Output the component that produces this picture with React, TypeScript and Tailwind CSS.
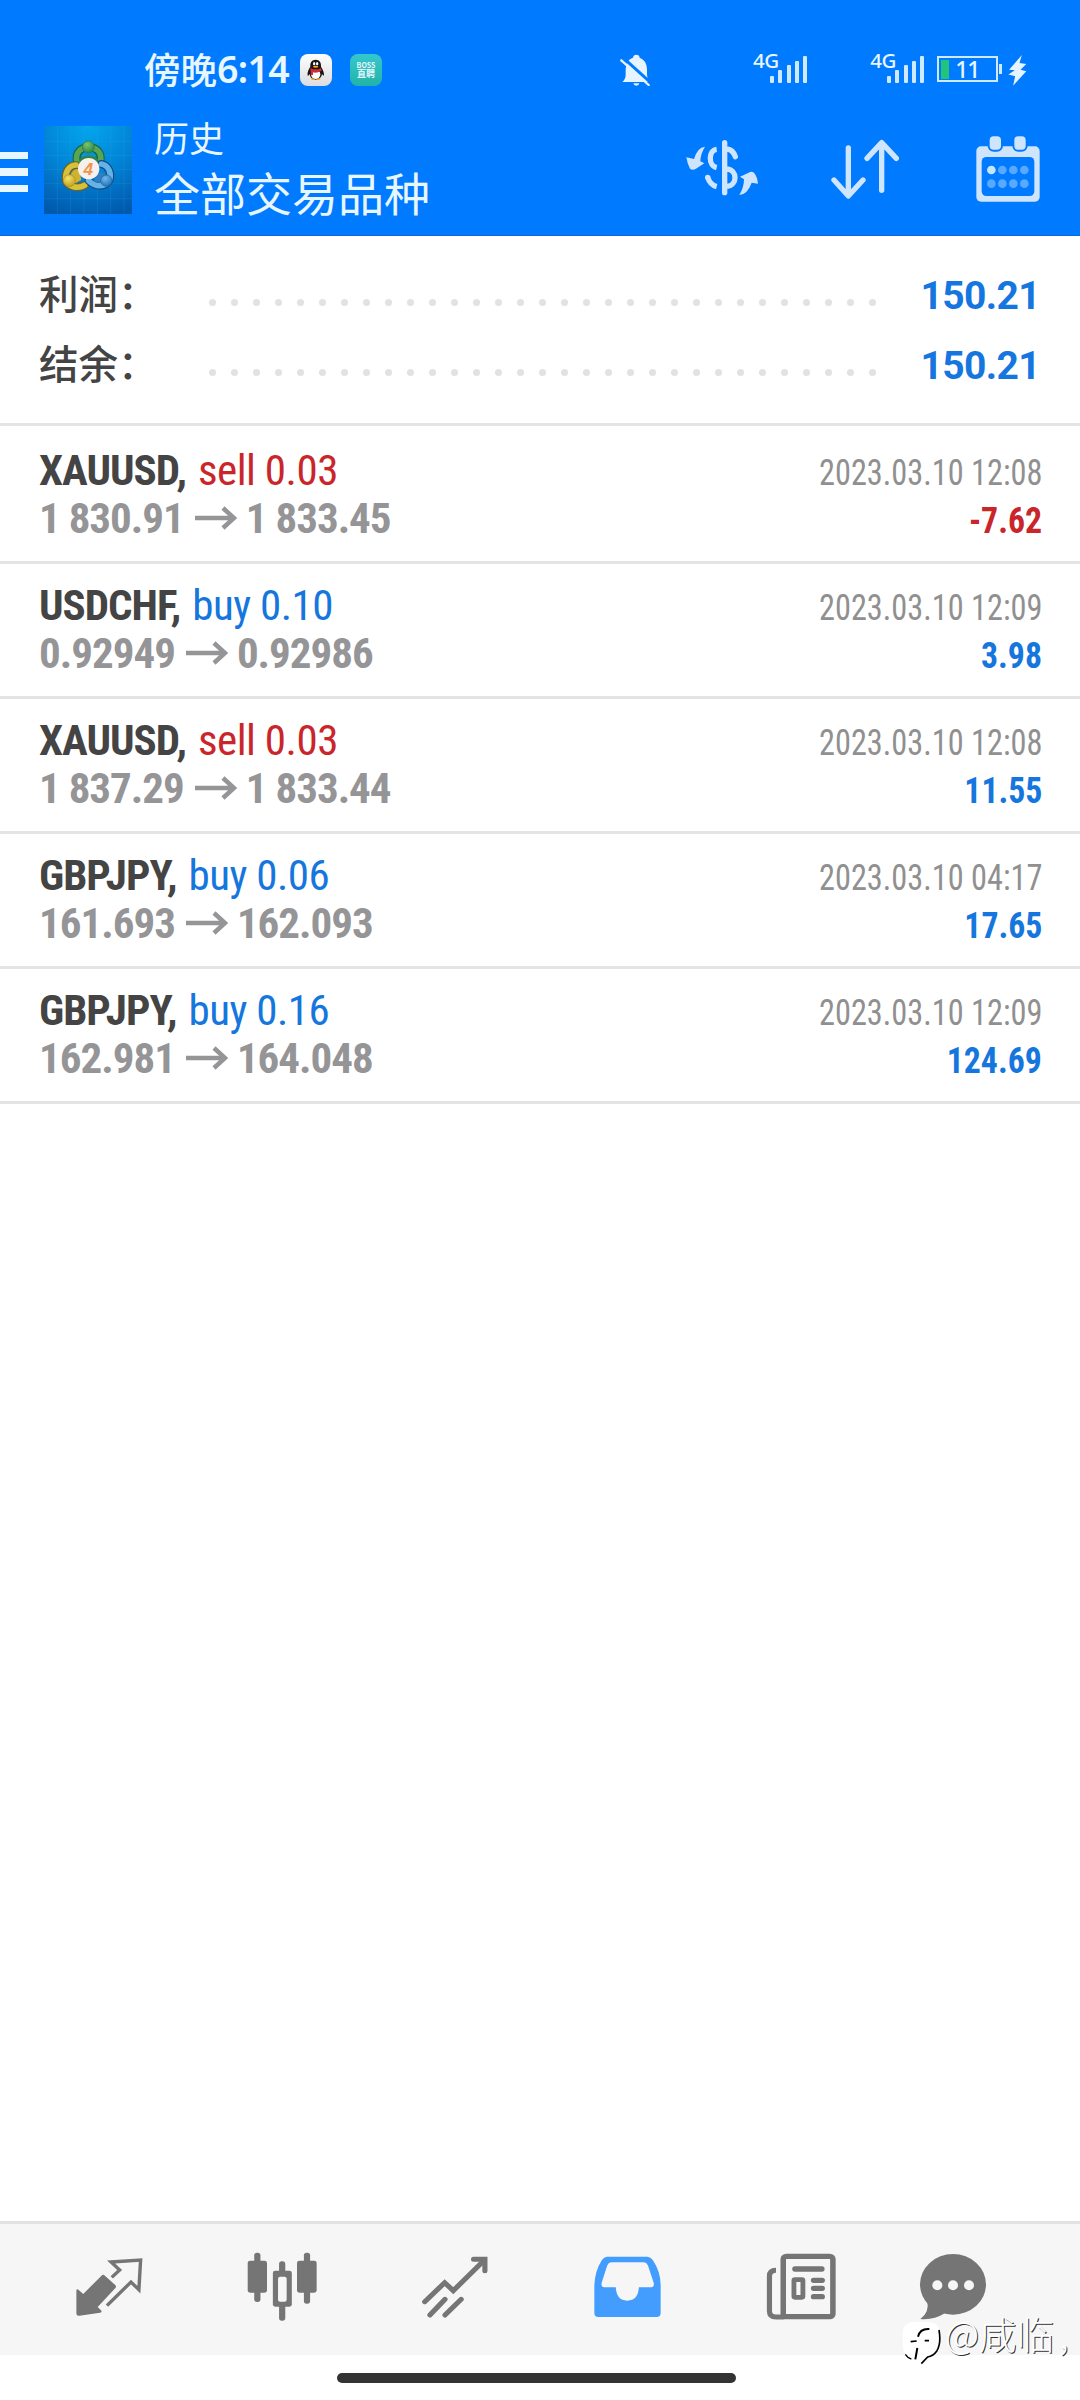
type Deal = {
  symbol: string;
  side: "buy" | "sell";
  volume: string;
  from: string;
  to: string;
  time: string;
  profit: string;
};

const deals: Deal[] = [
  { symbol: "XAUUSD", side: "sell", volume: "0.03", from: "1 830.91", to: "1 833.45", time: "2023.03.10 12:08", profit: "-7.62" },
  { symbol: "USDCHF", side: "buy", volume: "0.10", from: "0.92949", to: "0.92986", time: "2023.03.10 12:09", profit: "3.98" },
  { symbol: "XAUUSD", side: "sell", volume: "0.03", from: "1 837.29", to: "1 833.44", time: "2023.03.10 12:08", profit: "11.55" },
  { symbol: "GBPJPY", side: "buy", volume: "0.06", from: "161.693", to: "162.093", time: "2023.03.10 04:17", profit: "17.65" },
  { symbol: "GBPJPY", side: "buy", volume: "0.16", from: "162.981", to: "164.048", time: "2023.03.10 12:09", profit: "124.69" },
];

function BellOff() {
  return (
    <svg className="h-8 w-[30px]" viewBox="121 73 90 96" fill="none">
      <path d="M128 157Q138 148 138 135V118Q139 91 160 84Q161 75 170 75Q179 75 180 84Q201 92 202 118V135Q202 148 210 157Z" fill="#e6f4ff" />
      <path d="M161 161H179Q178 168 170 168Q162 168 161 161Z" fill="#e6f4ff" />
      <path d="M130 84L214 160" stroke="#007aff" strokeWidth="9" />
      <path d="M125 92L207 166" stroke="#e6f4ff" strokeWidth="7" strokeLinecap="round" />
    </svg>
  );
}

function Signal() {
  return (
    <div className="flex h-[33px]">
      <span className="mt-[-3px] h-6 w-[26px] font-['Noto_Sans'] text-[20.5px] leading-6 font-medium tracking-[-0.5px]">4G</span>
      <div className="-ml-[9px] flex h-8 items-end gap-[4.3px]">
        <i className="h-[7px] w-1 rounded-[1px] bg-[#cfe9ff]" />
        <i className="h-[13px] w-1 rounded-[1px] bg-[#cfe9ff]" />
        <i className="h-[18px] w-1 rounded-[1px] bg-[#cfe9ff]" />
        <i className="h-[22px] w-1 rounded-[1px] bg-[#cfe9ff]" />
        <i className="h-[27px] w-1 rounded-[1px] bg-[#cfe9ff]" />
      </div>
    </div>
  );
}

function QQIcon() {
  return (
    <svg className="size-8" viewBox="60 42 96 96">
      <defs>
        <linearGradient id="qq" x1="0" y1="0" x2="0" y2="1">
          <stop offset="0" stopColor="#ffffff" />
          <stop offset="1" stopColor="#dcdcdf" />
        </linearGradient>
      </defs>
      <rect x="60" y="42" width="96" height="96" rx="24" fill="url(#qq)" />
      <path d="M107 59C95 59 90 68 91 80C86 88 81 97 83 107Q86 108 89 102C91 114 98 119 107 119S124 114 126 102Q130 108 132 106C133 97 128 88 123 80C124 68 119 59 107 59Z" fill="#161616" />
      <ellipse cx="107" cy="103" rx="14" ry="14" fill="#fff" />
      <path d="M91 84Q107 93 123 84L125 92Q108 101 99 97V105H92V93Z" fill="#d52b32" />
      <ellipse cx="102.500" cy="71" rx="3.500" ry="5" fill="#fff" />
      <ellipse cx="111.500" cy="71" rx="3.500" ry="5" fill="#fff" />
      <ellipse cx="107" cy="80" rx="8" ry="3" fill="#f5a623" />
      <path d="M92 117Q98 112 106 118Q100 122 92 117ZM108 118Q116 112 122 117Q116 122 108 118Z" fill="#f0a030" />
    </svg>
  );
}

function AppLogo() {
  return (
    <svg className="h-[88px] w-[88px]" viewBox="12 20 264 264">
      <defs>
        <radialGradient id="bg" cx="0.5" cy="0" r="1.050">
          <stop offset="0" stopColor="#03a6ee" />
          <stop offset="0.5" stopColor="#0284d6" />
          <stop offset="1" stopColor="#0059ad" />
        </radialGradient>
        <radialGradient id="green" cx="0.4" cy="0.3" r="0.8">
          <stop offset="0" stopColor="#7cc473" />
          <stop offset="1" stopColor="#23803a" />
        </radialGradient>
        <radialGradient id="yellow" cx="0.4" cy="0.3" r="0.8">
          <stop offset="0" stopColor="#f3e26a" />
          <stop offset="1" stopColor="#bd9a1a" />
        </radialGradient>
        <radialGradient id="blue" cx="0.4" cy="0.3" r="0.8">
          <stop offset="0" stopColor="#6fb8ec" />
          <stop offset="1" stopColor="#1a6cb3" />
        </radialGradient>
      </defs>
      <rect x="12" y="20" width="264" height="264" fill="url(#bg)" />
      <path d="M52 20V284M92 20V284M132 20V284M172 20V284M212 20V284M252 20V284M12 66H276M12 108H276M12 150H276M12 192H276M12 238H276" stroke="#47b7f0" strokeOpacity="0.220" strokeWidth="2" />
      <g fill="none" strokeLinecap="round">
        <path d="M112 128C104 98 124 84 146 84S188 98 180 128" stroke="#17603d" strokeWidth="24" />
        <path d="M111 128C104 98 124 84 146 84S188 98 181 128" stroke="#56a655" strokeWidth="17" />
        <path d="M108 138C84 138 74 160 78 184C86 202 112 210 134 198" stroke="#6f641d" strokeWidth="24" />
        <path d="M108 137C85 138 74 160 78 184C86 202 112 210 134 198" stroke="#d9c03a" strokeWidth="17" />
        <path d="M184 134C206 138 216 162 208 184C196 204 166 204 146 184" stroke="#0d4e86" strokeWidth="24" />
        <path d="M184 134C206 138 216 162 208 184C196 204 166 204 146 184" stroke="#65b2e6" strokeWidth="17" />
      </g>
      <path d="M118 122C126 104 166 104 174 122L160 135H130Z" fill="#2e8545" />
      <path d="M92 166C96 152 108 146 118 150L124 182L106 192Z" fill="#d0b22f" />
      <path d="M176 160C188 156 198 164 200 172L186 192L160 186Z" fill="#2f7fc2" />
      <circle cx="145" cy="83" r="18" fill="url(#green)" stroke="#2a7a40" strokeWidth="2" />
      <circle cx="88" cy="184" r="18" fill="url(#yellow)" stroke="#a98d1e" strokeWidth="2" />
      <circle cx="199" cy="184" r="17" fill="url(#blue)" stroke="#17639f" strokeWidth="2" />
      <circle cx="146" cy="148" r="32" fill="#f6f1ee" />
      <text x="145" y="167" textAnchor="middle" fontFamily="Liberation Sans" fontStyle="italic" fontWeight="700" fontSize="52" fill="#f0954a">4</text>
    </svg>
  );
}

function CurrencyIcon() {
  return (
    <svg className="h-[60px] w-[76px]" viewBox="42 56 228 180" fill="none" stroke="#cfe5fd" strokeWidth="16">
      <path d="M164 70V220M171 89Q189 91 196 112" strokeLinecap="round" />
      <path d="M140 90C115 93 114 139 140 145M171 149C203 152 203 198 171 201" />
      <path d="M140 202Q120 197 113 174" />
      <circle cx="113" cy="174" r="8" fill="#cfe5fd" stroke="none" />
      <path d="M105 82Q82 84 72 119L49 114Q52 134 60 148Q68 154 78 148L103 132L91 126Q92 102 105 82Z" fill="#cfe5fd" stroke="none" />
      <path d="M208 227Q232 226 245 190L264 193Q262 172 252 160Q244 155 236 160L210 172L222 180Q222 204 208 227Z" fill="#cfe5fd" stroke="none" />
    </svg>
  );
}

function SortIcon() {
  return (
    <svg className="h-[60px] w-[68px]" viewBox="483 58 204 180" fill="none" stroke="#cfe5fd" strokeWidth="16" strokeLinecap="round" strokeLinejoin="round">
      <path d="M535 85V228M492 181L535 229L579 181" />
      <path d="M635 212V69M591 116L635 69L679 116" />
    </svg>
  );
}

function CalendarIcon() {
  return (
    <svg className="h-[66px] w-[64px]" viewBox="1190 317 192 198">
      <rect x="1191" y="348" width="190" height="166" rx="14" fill="#cfe5fd" />
      <rect x="1207" y="380" width="158" height="117" rx="14" fill="#007aff" />
      <rect x="1228" y="315" width="40" height="46" rx="15" fill="#cfe5fd" stroke="#007aff" strokeWidth="6" />
      <rect x="1302" y="315" width="40" height="46" rx="15" fill="#cfe5fd" stroke="#007aff" strokeWidth="6" />
      <circle cx="1236" cy="419" r="13" fill="#c5e6ff" />
      <g fill="#58a9ff">
        <circle cx="1269" cy="419" r="13" />
        <circle cx="1302" cy="419" r="13" />
        <circle cx="1335" cy="419" r="13" />
        <circle cx="1236" cy="460" r="13" />
        <circle cx="1269" cy="460" r="13" />
        <circle cx="1302" cy="460" r="13" />
        <circle cx="1335" cy="460" r="13" />
      </g>
    </svg>
  );
}

function QuotesIcon() {
  return (
    <svg className="h-[60px] w-[68px]" viewBox="215 175 198 180" preserveAspectRatio="none" fill="none">
      <path d="M219 275Q221 270 225 273L239 286L292 231Q297 226 302 231L333 260Q336 265 332 269L281 325L292 336Q294 341 288 342L228 351Q219 352 219 345Z" fill="#757575" />
      <path d="M322 236L345 214L320 190L406 184L401 273L378 250L308 321" stroke="#757575" strokeWidth="10" />
    </svg>
  );
}

function CandlesIcon() {
  return (
    <svg className="h-[69px] w-[70px]" viewBox="714 160 203 207" preserveAspectRatio="none" fill="#757575">
      <rect x="716" y="186" width="56" height="96" rx="7" />
      <rect x="735" y="162" width="18" height="148" rx="8" />
      <rect x="859" y="186" width="57" height="96" rx="7" />
      <rect x="879" y="162" width="18" height="153" rx="8" />
      <rect x="807" y="188" width="18" height="178" rx="8" />
      <rect x="789" y="216" width="55" height="108" rx="7" />
      <rect x="804" y="234" width="25" height="75" rx="6" fill="#f6f6f6" />
    </svg>
  );
}

function TrendIcon() {
  return (
    <svg className="h-[62px] w-[66px]" viewBox="1223 168 192 186" preserveAspectRatio="none" fill="none" stroke="#757575" strokeWidth="15" strokeLinecap="round">
      <path d="M1231 305L1289 248L1314 272L1404 181" />
      <path d="M1373 178H1406V212" />
      <path d="M1246 345L1290 298M1290 345L1337 298" />
    </svg>
  );
}

function InboxIcon() {
  return (
    <svg className="h-[62px] w-[67px]" viewBox="157 168 194 186" preserveAspectRatio="none" fill="#429dff">
      <path
        fillRule="evenodd"
        d="M194 170H312Q321 171 327 180Q350 215 350 255V338Q350 351 338 351H170Q158 351 158 338V255Q160 212 180 180Q186 171 194 170ZM207 187Q198 188 195 197L179 249Q177 262 187 262H220Q222 302 253 302Q285 302 287 262H322Q332 262 330 249L313 196Q309 187 301 187Z"
      />
    </svg>
  );
}

function NewsIcon() {
  return (
    <svg className="h-[68px] w-[70px]" viewBox="656 160 203 204" preserveAspectRatio="none" fill="none" stroke="#757575" strokeWidth="16">
      <rect x="706" y="170" width="144" height="181" rx="9" />
      <path d="M685 212Q666 212 666 230V334Q666 352 685 352H710" strokeWidth="15" />
      <path d="M740 208H818M794 242H819M794 266H819M794 291H819" strokeLinecap="round" />
      <rect x="737" y="240" width="26" height="53" rx="3" strokeWidth="14" />
    </svg>
  );
}

function ChatIcon() {
  return (
    <svg className="h-[68px] w-[68px]" viewBox="87 38 204 204">
      <ellipse cx="189" cy="132" rx="99" ry="91" fill="#757575" />
      <path d="M111 180Q120 216 91 236Q130 240 166 218Z" fill="#757575" />
      <circle cx="142" cy="135" r="15" fill="#f6f6f6" />
      <circle cx="189" cy="135" r="15" fill="#f6f6f6" />
      <circle cx="237" cy="135" r="15" fill="#f6f6f6" />
    </svg>
  );
}

function WatermarkLogo() {
  return (
    <svg className="mt-[3px] h-[46px] w-[40px]" viewBox="36 234 120 138" fill="none" stroke="#000">
      <path d="M74 240H114Q150 240 150 278V310Q148 342 116 346L96 366L84 346H74Q38 346 38 310V276Q38 240 74 240Z" fill="#fff" stroke="none" />
      <path d="M147 264Q154 304 141 326Q130 342 113 345L94 365" strokeWidth="5" />
      <path d="M84 284Q90 259 118 261" strokeWidth="6" />
      <path d="M62 299L80 297M104 296H117" strokeWidth="5" />
      <path d="M82 318L76 352" strokeWidth="6" />
      <path d="M46 337Q53 348 64 351" strokeWidth="4" />
    </svg>
  );
}

function Summary({ label, value }: { label: string; value: string }) {
  return (
    <div className="flex h-[70px] items-start">
      <span className="-mt-[2px] w-[170px] font-['Noto_Sans_CJK_SC',sans-serif] text-[39.5px] leading-[70px] font-medium">{label}</span>
      <div className="mt-[40px] flex w-[667px] justify-between">
        {Array.from({ length: 31 }, (_, i) => (
          <i key={i} className="size-[7px] rounded-full bg-[#e2e2e4]" />
        ))}
      </div>
      <span className="mt-[2px] ml-auto font-['Roboto',sans-serif] text-[39px] leading-[70px] font-bold tracking-[-0.6px] text-[#1576e0]">{value}</span>
    </div>
  );
}

function DealRow({ deal }: { deal: Deal }) {
  const sideColor = deal.side === "sell" ? "text-[#c9252b]" : "text-[#1576dd]";
  const profitColor = deal.profit.startsWith("-") ? "text-[#c9252b]" : "text-[#1576dd]";
  return (
    <li className="border-b-[3px] border-[#e4e4e4] pt-[17px] pr-[38px] pb-[19px] pl-[39px]">
      <div className="flex h-12 items-baseline justify-between text-[43px] leading-[48px]">
        <div className="flex items-baseline">
          <span className="font-bold tracking-[-1px]">{deal.symbol},</span>
          <span className={"ml-[12px] tracking-[-0.5px] " + sideColor}>{deal.side} {deal.volume}</span>
        </div>
        <span className="origin-right scale-x-[0.885] text-[36.5px] text-[#909090]">{deal.time}</span>
      </div>
      <div className="flex h-12 items-baseline justify-between text-[43px] leading-[48px] font-bold text-[#959597]">
        <div className="flex items-baseline tracking-[-1px]">
          {deal.from}
          <svg className="mr-[9px] ml-[11px] h-6 w-[42px] self-center" viewBox="0 0 42 24" fill="none" stroke="#959597" strokeWidth="4.5">
            <path d="M0 12H39M28 2L39 12L28 22" />
          </svg>
          {deal.to}
        </div>
        <span className={"origin-right scale-x-[0.925] text-[36.5px] " + profitColor}>{deal.profit}</span>
      </div>
    </li>
  );
}

export default function App() {
  return (
    <div className="relative flex h-[2400px] w-[1080px] flex-col overflow-hidden bg-white font-['Roboto_Condensed','Roboto',sans-serif] text-[#444]">
      <header className="h-[236px] border-b border-[#1068d8] bg-[#007aff] text-[#e8f6ff]">
        <div className="flex h-[118px] items-start pt-[54px] pl-[144px]">
          <div className="-mt-px flex h-8 w-[156px] items-center whitespace-nowrap">
            <span className="font-['Noto_Sans_CJK_SC',sans-serif] text-[36.5px] leading-8 font-medium">傍晚</span>
            <span className="font-['Noto_Sans','Noto_Sans_CJK_SC',sans-serif] text-[37.5px] leading-8 font-semibold tracking-[-0.7px]">6:14</span>
          </div>
          <QQIcon />
          <div className="ml-[18px] flex size-8 flex-col items-center justify-center rounded-lg bg-gradient-to-b from-[#35c8cc] to-[#21b3a8] font-['Noto_Sans_CJK_SC',sans-serif] font-bold">
            <span className="text-[7px] leading-[8px]">BOSS</span>
            <span className="text-[9px] leading-[10px]">直聘</span>
          </div>
          <div className="ml-[238px]">
            <BellOff />
          </div>
          <div className="-mt-[3px] ml-[103px]">
            <Signal />
          </div>
          <div className="-mt-[3px] ml-[63px]">
            <Signal />
          </div>
          <div className="mt-[2px] ml-[13px] flex items-center">
            <div className="flex h-[26px] w-[61px] items-center border-2 border-[#cfe9ff] pl-[2px]">
              <i className="h-[19px] w-2 bg-[#22c47a]" />
              <span className="w-9 text-center font-['Noto_Sans'] text-[23px] leading-[22px] font-medium tracking-[-1px]">11</span>
            </div>
            <i className="ml-px h-2.5 w-[3px] bg-[#cfe9ff]" />
          </div>
          <svg className="mt-px ml-[6px] h-[31px] w-[19px]" viewBox="1286 74 56 92" fill="#e6f4ff">
            <path d="M1327 74L1289 118L1306 119L1287 132L1307 137L1301 165L1340 122L1323 118L1340 101L1320 98Z" />
          </svg>
        </div>
        <div className="flex h-[110px] items-start">
          <div className="mt-[34px] flex w-[28px] flex-col gap-[9px]">
            <i className="h-[7px] bg-[#e8f6ff]" />
            <i className="h-[8px] bg-[#e8f6ff]" />
            <i className="h-[7px] bg-[#e8f6ff]" />
          </div>
          <div className="mt-[8px] ml-4">
            <AppLogo />
          </div>
          <div className="ml-[22px] w-[530px] font-['Noto_Sans_CJK_SC',sans-serif]">
            <div className="-mt-[2px] text-[35px] leading-[42px]">历史</div>
            <div className="text-[46px] leading-[67px]">全部交易品种</div>
          </div>
          <div className="mt-[20px]">
            <CurrencyIcon />
          </div>
          <div className="mt-[21px] ml-[71px]">
            <SortIcon />
          </div>
          <div className="mt-[18px] ml-[77px]">
            <CalendarIcon />
          </div>
        </div>
      </header>

      <section className="h-[190px] border-b-[3px] border-[#e4e4e4] pt-[23px] pr-[40px] pl-[39px]">
        <Summary label="利润：" value="150.21" />
        <Summary label="结余：" value="150.21" />
      </section>

      <ul className="pt-[3px]">
        {deals.map((deal, i) => (
          <DealRow key={i} deal={deal} />
        ))}
      </ul>

      <nav className="mt-auto flex h-[134px] items-center border-t-[3px] border-[#e2e2e3] bg-[#f6f6f6] pr-[39px] pb-[6px] pl-[22px]">
        <div className="flex w-[173px] justify-center"><QuotesIcon /></div>
        <div className="flex w-[173px] justify-center"><CandlesIcon /></div>
        <div className="flex w-[173px] justify-center"><TrendIcon /></div>
        <div className="flex w-[173px] justify-center"><InboxIcon /></div>
        <div className="flex w-[173px] justify-center"><NewsIcon /></div>
        <div className="flex w-[131px] justify-center"><ChatIcon /></div>
      </nav>
      <footer className="flex h-[45px] shrink-0 justify-center pt-[18px] pr-[7px]">
        <div className="h-[10px] w-[399px] rounded-full bg-[#333]" />
      </footer>

      <div className="absolute top-[2317px] left-[902px] flex items-start whitespace-nowrap">
        <WatermarkLogo />
        <span className="-mt-[4px] ml-[3px] font-['Noto_Sans_CJK_SC',sans-serif] text-[37.5px] leading-[40px] font-light text-white [text-shadow:1px_1px_0_#333]">
          @咸临<span className="ml-[5px]">,</span>
        </span>
      </div>
    </div>
  );
}
